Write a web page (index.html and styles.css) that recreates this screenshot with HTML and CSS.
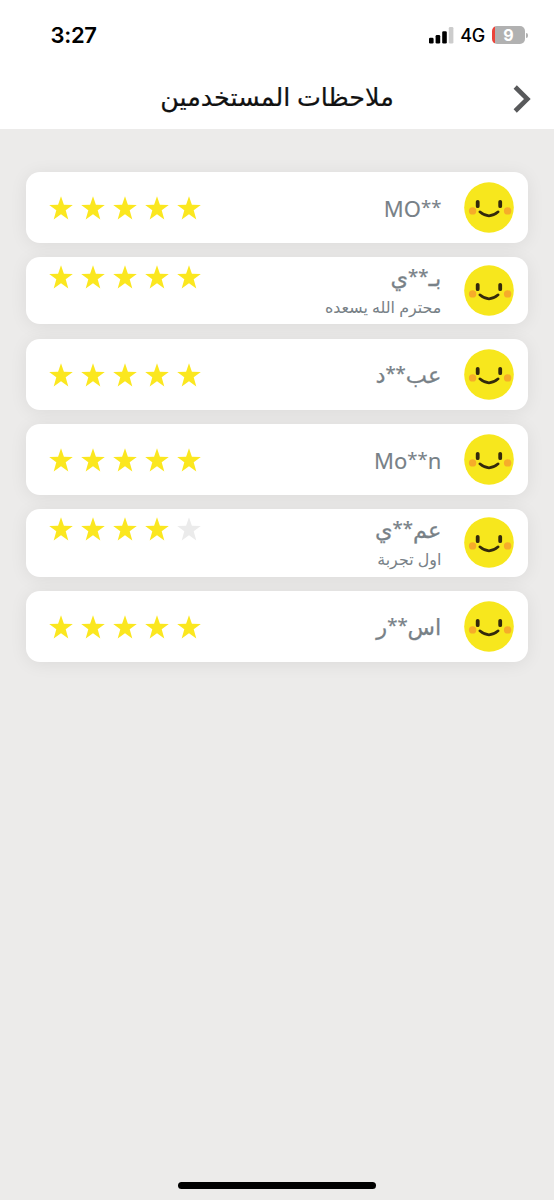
FILE: index.html
```html
<!DOCTYPE html>
<html lang="ar" dir="rtl">
<head>
<meta charset="utf-8">
<title>ملاحظات المستخدمين</title>
<link rel="stylesheet" href="styles.css">
</head>
<body>
<svg class="defs" width="0" height="0">
  <symbol id="face" viewBox="0 0 50 51">
    <ellipse cx="25" cy="25.5" rx="24.8" ry="25.3" fill="#f7e71d"/>
    <circle cx="8.6" cy="28.9" r="3.7" fill="#f6ac2a"/>
    <circle cx="43.6" cy="28.9" r="3.7" fill="#f6ac2a"/>
    <path d="M13.7 19.8v4.4M36.2 19.8v4.4" stroke="#33290c" stroke-width="3.8" stroke-linecap="round"/>
    <path d="M15.8 29.8q9.2 8 18.4 0" fill="none" stroke="#33290c" stroke-width="2.6" stroke-linecap="round"/>
  </symbol>
  <symbol id="star" viewBox="0 0 24 24">
    <path d="M12 .2l2.9 8.6 8.9.1-7.1 5.4 2.6 9.2-7.3-5.3-7.3 5.3 2.6-9.2L.2 8.9l8.9-.1z"/>
  </symbol>
</svg>
<header class="header">
  <div class="status" dir="ltr">
    <span class="time">3:27</span>
    <div class="indicators">
      <svg class="signal" width="25" height="17" viewBox="0 0 25 17">
        <rect x="0" y="10.8" width="4.6" height="5.7" rx="1.3"/>
        <rect x="6.6" y="8" width="4.6" height="8.5" rx="1.3"/>
        <rect x="13.2" y="4.2" width="4.6" height="12.3" rx="1.3"/>
        <rect x="19.8" y="0" width="4.6" height="16.5" rx="1.3" fill="#ccc"/>
      </svg>
      <span class="network">4G</span>
      <div class="battery"><span class="level">9</span></div>
      <span class="cap"></span>
    </div>
  </div>
  <div class="bar">
    <svg class="chevron" width="18" height="28" viewBox="0 0 18 28"><path d="M2.2 2l12.2 12L2.2 26" fill="none" stroke="#58595b" stroke-width="4.6"/></svg>
    <h1 class="title">ملاحظات المستخدمين</h1>
  </div>
</header>
<main class="list">
  <article class="card">
    <svg class="face"><use href="#face"/></svg>
    <div class="text"><div class="name latin"><bdi>MO<span class="mask">**</span></bdi></div></div>
    <div class="stars"><svg><use href="#star"/></svg><svg><use href="#star"/></svg><svg><use href="#star"/></svg><svg><use href="#star"/></svg><svg><use href="#star"/></svg></div>
  </article>
  <article class="card noted">
    <svg class="face"><use href="#face"/></svg>
    <div class="text"><div class="name"><bdi>بـ<span class="mask">**</span>ي</bdi></div><p class="note">محترم الله يسعده</p></div>
    <div class="stars"><svg><use href="#star"/></svg><svg><use href="#star"/></svg><svg><use href="#star"/></svg><svg><use href="#star"/></svg><svg><use href="#star"/></svg></div>
  </article>
  <article class="card">
    <svg class="face"><use href="#face"/></svg>
    <div class="text"><div class="name"><bdi>عب<span class="mask">**</span>د</bdi></div></div>
    <div class="stars"><svg><use href="#star"/></svg><svg><use href="#star"/></svg><svg><use href="#star"/></svg><svg><use href="#star"/></svg><svg><use href="#star"/></svg></div>
  </article>
  <article class="card">
    <svg class="face"><use href="#face"/></svg>
    <div class="text"><div class="name latin"><bdi>Mo<span class="mask">**</span>n</bdi></div></div>
    <div class="stars"><svg><use href="#star"/></svg><svg><use href="#star"/></svg><svg><use href="#star"/></svg><svg><use href="#star"/></svg><svg><use href="#star"/></svg></div>
  </article>
  <article class="card noted">
    <svg class="face"><use href="#face"/></svg>
    <div class="text"><div class="name"><bdi>عم<span class="mask">**</span>ي</bdi></div><p class="note">اول تجربة</p></div>
    <div class="stars"><svg><use href="#star"/></svg><svg><use href="#star"/></svg><svg><use href="#star"/></svg><svg><use href="#star"/></svg><svg class="off"><use href="#star"/></svg></div>
  </article>
  <article class="card">
    <svg class="face"><use href="#face"/></svg>
    <div class="text"><div class="name"><bdi>اس<span class="mask">**</span>ر</bdi></div></div>
    <div class="stars"><svg><use href="#star"/></svg><svg><use href="#star"/></svg><svg><use href="#star"/></svg><svg><use href="#star"/></svg><svg><use href="#star"/></svg></div>
  </article>
</main>
<div class="home"></div>
</body>
</html>
```
FILE: styles.css
```css
* { box-sizing: border-box; }
body {
  margin: 0;
  height: 1200px;
  display: flex;
  flex-direction: column;
  background: #ecebea;
  font-family: "Noto Sans", "DejaVu Sans", sans-serif;
  overflow: hidden;
}
.defs { display: none; }
.header { height: 129px; flex: none; background: #fff; }
.status {
  height: 70px;
  display: flex;
  justify-content: space-between;
  align-items: center;
  padding: 0 26px 0 50.5px;
  font-family: Inter, sans-serif;
  color: #000;
}
.time { font-size: 22px; font-weight: 600; letter-spacing: -.3px; }
.indicators { display: flex; align-items: center; }
.network { font-size: 18px; font-weight: 500; margin-left: 6px; letter-spacing: -.3px; }
.battery {
  width: 33px;
  height: 18px;
  margin-left: 7px;
  border-radius: 5px;
  background: linear-gradient(to right, #eb4339 3px, #b1b1b1 3px);
  display: flex;
  align-items: center;
  justify-content: center;
}
.level { color: #fff; font-size: 16px; font-weight: 700; line-height: 18px; }
.cap { width: 2px; height: 5px; margin-left: 1px; border-radius: 0 2px 2px 0; background: #b1b1b1; }
.bar {
  height: 59px;
  display: grid;
  grid-template-columns: 42px 1fr 42px;
  align-items: start;
}
.chevron { margin: 14.5px 23px 0 0; }
.title {
  margin: 7px 0 0;
  font-size: 25.4px;
  line-height: 38px;
  font-weight: 400;
  text-align: center;
  color: #111;
  white-space: nowrap;
  -webkit-text-stroke: .2px #111;
}
.list { display: flex; flex-direction: column; gap: 14.3px; padding: 43px 25.7px 0; flex: 1; }
.card {
  height: 71px;
  display: flex;
  align-items: center;
  padding: 0 14.7px 0 23.2px;
  border-radius: 14px;
  background: #fff;
  box-shadow: 0 2px 18px rgba(0, 0, 0, .07);
}
.noted { height: 67.2px; }
.face { width: 50px; height: 51px; flex: none; }
.text { flex: 1; margin-right: 22.3px; color: #788187; white-space: nowrap; }
.name { font-size: 22.5px; line-height: 30px; padding-top: 1px; -webkit-text-stroke: .25px #788187; }
.latin { font-size: 22px; padding: 0; -webkit-text-stroke-width: .1px; }
.mask { font-size: 18.5px; line-height: 1; vertical-align: 3px; }
.noted .name { margin-top: 0; padding: 0; }
.note { margin: 1px 0 0; font-size: 15.9px; line-height: 26px; }
.stars { display: flex; direction: ltr; gap: 8.1px; padding-top: 1px; }
.stars svg { width: 24px; height: 24px; fill: #fbe71f; }
.stars .off { fill: #ebebeb; }
.noted .text { padding-top: 2px; }
.noted .stars { align-self: flex-start; margin-top: 7px; }
.home { width: 198px; height: 7px; margin: 0 auto 11.5px; flex: none; border-radius: 4px; background: #000; }
```
